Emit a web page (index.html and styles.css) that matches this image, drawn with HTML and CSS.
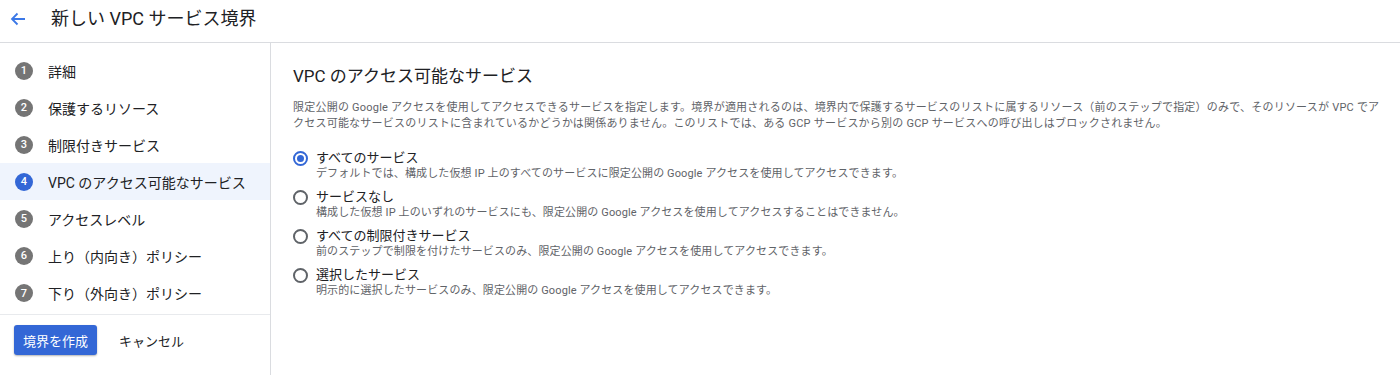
FILE: index.html
```html
<!DOCTYPE html>
<html lang="ja">
<head>
<meta charset="utf-8">
<link rel="stylesheet" href="styles.css">
</head>
<body>
<header class="topbar">
  <span class="back">
    <svg width="16" height="14" viewBox="0 0 16 14"><path d="M15 7H2M7.5 1.5L2 7l5.5 5.5" fill="none" stroke="#3b78e7" stroke-width="1.8"/></svg>
  </span>
  <h1 class="title">新しい VPC サービス境界</h1>
</header>
<div class="layout">
  <aside class="sidebar">
    <ol class="steps">
      <li class="step"><span class="num">1</span><span>詳細</span></li>
      <li class="step"><span class="num">2</span><span>保護するリソース</span></li>
      <li class="step"><span class="num">3</span><span>制限付きサービス</span></li>
      <li class="step active"><span class="num">4</span><span>VPC のアクセス可能なサービス</span></li>
      <li class="step"><span class="num">5</span><span>アクセスレベル</span></li>
      <li class="step"><span class="num">6</span><span>上り（内向き）ポリシー</span></li>
      <li class="step"><span class="num">7</span><span>下り（外向き）ポリシー</span></li>
    </ol>
    <div class="actions">
      <button class="btn-primary">境界を作成</button>
      <button class="btn-text">キャンセル</button>
    </div>
  </aside>
  <main class="content">
    <h2 class="heading">VPC のアクセス可能なサービス</h2>
    <p class="desc">限定公開の Google アクセスを使用してアクセスできるサービスを指定します。境界が適用されるのは、境界内で保護するサービスのリストに属するリソース（前のステップで指定）のみで、そのリソースが VPC でアクセス可能なサービスのリストに含まれているかどうかは関係ありません。このリストでは、ある GCP サービスから別の GCP サービスへの呼び出しはブロックされません。</p>
    <div class="options">
      <div class="option">
        <span class="radio checked"></span>
        <div class="opt-text">
          <div class="opt-label">すべてのサービス</div>
          <div class="opt-help">デフォルトでは、構成した仮想 IP 上のすべてのサービスに限定公開の Google アクセスを使用してアクセスできます。</div>
        </div>
      </div>
      <div class="option">
        <span class="radio"></span>
        <div class="opt-text">
          <div class="opt-label">サービスなし</div>
          <div class="opt-help">構成した仮想 IP 上のいずれのサービスにも、限定公開の Google アクセスを使用してアクセスすることはできません。</div>
        </div>
      </div>
      <div class="option">
        <span class="radio"></span>
        <div class="opt-text">
          <div class="opt-label">すべての制限付きサービス</div>
          <div class="opt-help">前のステップで制限を付けたサービスのみ、限定公開の Google アクセスを使用してアクセスできます。</div>
        </div>
      </div>
      <div class="option">
        <span class="radio"></span>
        <div class="opt-text">
          <div class="opt-label">選択したサービス</div>
          <div class="opt-help">明示的に選択したサービスのみ、限定公開の Google アクセスを使用してアクセスできます。</div>
        </div>
      </div>
    </div>
  </main>
</div>
</body>
</html>
```

FILE: styles.css
```css
* { box-sizing: border-box; }
html, body { margin: 0; padding: 0; background: #fff; }
body {
  font-family: Roboto, "Noto Sans CJK JP", sans-serif;
  color: #202124;
  height: 375px;
  overflow: hidden;
}
.topbar {
  height: 43px;
  display: flex;
  align-items: center;
  border-bottom: 1px solid #dadce0;
}
.back {
  width: 16px;
  height: 14px;
  margin-left: 10px;
  margin-right: 25px;
  display: flex;
  position: relative;
  top: -2px;
}
.title {
  margin: 0;
  font-size: 18px;
  font-weight: 400;
  color: #202124;
  line-height: 24px;
  position: relative;
  top: -2px;
}
.layout {
  display: flex;
  height: 332px;
}
.sidebar {
  width: 271px;
  border-right: 1px solid #dadce0;
  display: flex;
  flex-direction: column;
}
.steps {
  list-style: none;
  margin: 0;
  padding: 9px 0 0 0;
  border-bottom: 1px solid #e8eaed;
}
.step {
  height: 37px;
  display: flex;
  align-items: center;
  padding-left: 15px;
  font-size: 14px;
  color: #202124;
}
.step:last-child { height: 38px; margin-bottom: 2px; }
.step.active { background: #eff4fd; }
.num {
  width: 18px;
  height: 18px;
  border-radius: 50%;
  background: #757575;
  color: #fff;
  font-size: 11px;
  font-weight: 500;
  display: flex;
  align-items: center;
  justify-content: center;
  margin-right: 15px;
}
.step.active .num { background: #3367d6; }
.actions {
  display: flex;
  align-items: center;
  padding: 10px 0 0 14px;
}
.btn-primary {
  font-family: inherit;
  font-size: 13px;
  color: #fff;
  background: #3367d6;
  border: none;
  border-radius: 3px;
  height: 30px;
  width: 83px;
  box-shadow: 0 1px 2px rgba(0,0,0,0.3);
  padding: 0;
}
.btn-text {
  font-family: inherit;
  font-size: 13px;
  color: #202124;
  background: none;
  border: none;
  margin-left: 22px;
  padding: 0;
}
.content {
  flex: 1;
  padding: 21px 10px 0 22px;
}
.heading {
  margin: 0;
  font-size: 17px;
  font-weight: 400;
  line-height: 24px;
  color: #202124;
}
.desc {
  margin: 12px 0 0 0;
  font-size: 11px;
  line-height: 16px;
  color: #5f6368;
  letter-spacing: 0.22px;
  max-width: 1088px;
}
.options {
  margin-top: 18px;
  display: flex;
  flex-direction: column;
  gap: 7px;
}
.option {
  display: flex;
  align-items: flex-start;
}
.radio {
  width: 15px;
  height: 15px;
  border: 2px solid #5f6368;
  border-radius: 50%;
  margin-top: 1px;
  margin-right: 8px;
  flex: none;
  display: flex;
  align-items: center;
  justify-content: center;
}
.radio.checked { border-color: #3367d6; }
.radio.checked::after {
  content: "";
  width: 7px;
  height: 7px;
  border-radius: 50%;
  background: #3367d6;
}
.opt-label {
  font-size: 13px;
  line-height: 16px;
  color: #202124;
}
.opt-help {
  font-size: 11px;
  line-height: 16px;
  color: #5f6368;
  letter-spacing: 0.12px;
}
```
